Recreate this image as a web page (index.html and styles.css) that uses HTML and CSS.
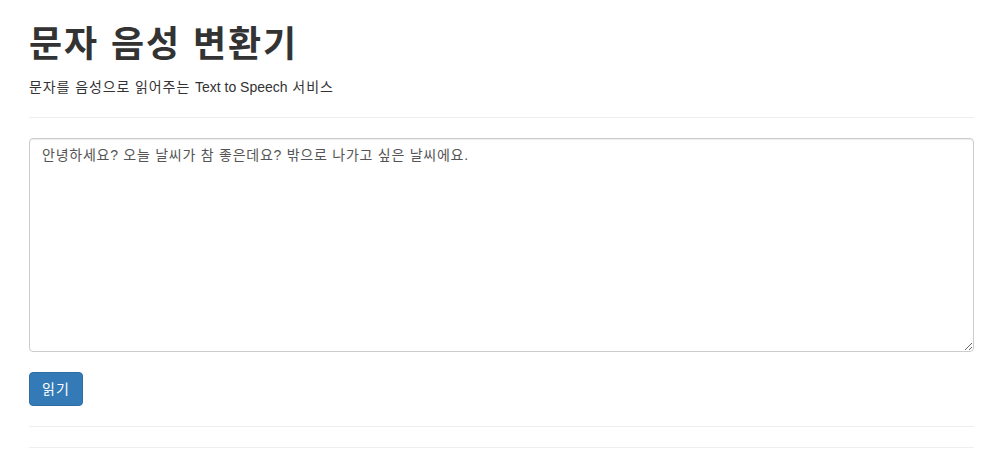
FILE: index.html
```html
<!DOCTYPE html>
<html lang="ko">
<head>
<meta charset="utf-8">
<title>문자 음성 변환기</title>
<link rel="stylesheet" href="styles.css">
</head>
<body>
<div class="container">
  <header class="page-header">
    <h1 class="title">문자 음성 변환기</h1>
    <p class="subtitle">문자를 음성으로 읽어주는 <span class="latin">Text to Speech</span> 서비스</p>
  </header>
  <hr class="divider">
  <form class="tts-form">
    <textarea class="text-input" rows="10">안녕하세요? 오늘 날씨가 참 좋은데요? 밖으로 나가고 싶은 날씨에요.</textarea>
    <div class="actions">
      <button type="button" class="btn-primary">읽기</button>
    </div>
  </form>
  <hr class="divider">
  <hr class="divider">
</div>
</body>
</html>
```

FILE: styles.css
```css
html, body {
  margin: 0;
  padding: 0;
  background: #fff;
}

body {
  font-family: "Liberation Sans", "Noto Sans CJK KR", Arial, sans-serif;
  font-size: 14px;
  line-height: 20px;
  color: #333;
}

.container {
  padding: 0 13px 0 29px;
}

.page-header {
  padding-top: 25px;
}

.title {
  margin: 0;
  font-size: 36px;
  line-height: 40px;
  font-weight: bold;
  letter-spacing: 1.9px;
  color: #333;
}

.subtitle {
  margin: 12px 0 0;
  font-size: 14px;
  line-height: 20px;
  letter-spacing: 0.9px;
}

.latin {
  letter-spacing: 0;
}

.divider {
  margin: 20px 0;
  border: 0;
  border-top: 1px solid #eee;
  height: 0;
}

.tts-form {
  margin: 0;
}

.text-input {
  display: block;
  box-sizing: border-box;
  width: 100%;
  height: 214px;
  margin: 0;
  padding: 6px 12px;
  font-family: "Liberation Sans", "Noto Sans CJK KR", Arial, sans-serif;
  font-size: 14px;
  line-height: 20px;
  letter-spacing: 0.75px;
  color: #555;
  background: #fff;
  border: 1px solid #ccc;
  border-radius: 4px;
  box-shadow: inset 0 1px 1px rgba(0, 0, 0, 0.075);
  resize: vertical;
}

.actions {
  margin-top: 20px;
  display: flex;
}

.btn-primary {
  box-sizing: border-box;
  height: 34px;
  padding: 6px 12px;
  font-family: "Liberation Sans", "Noto Sans CJK KR", Arial, sans-serif;
  font-size: 14px;
  line-height: 20px;
  letter-spacing: 1px;
  color: #fff;
  background: #337ab7;
  border: 1px solid #2e6da4;
  border-radius: 4px;
  cursor: pointer;
}
```
